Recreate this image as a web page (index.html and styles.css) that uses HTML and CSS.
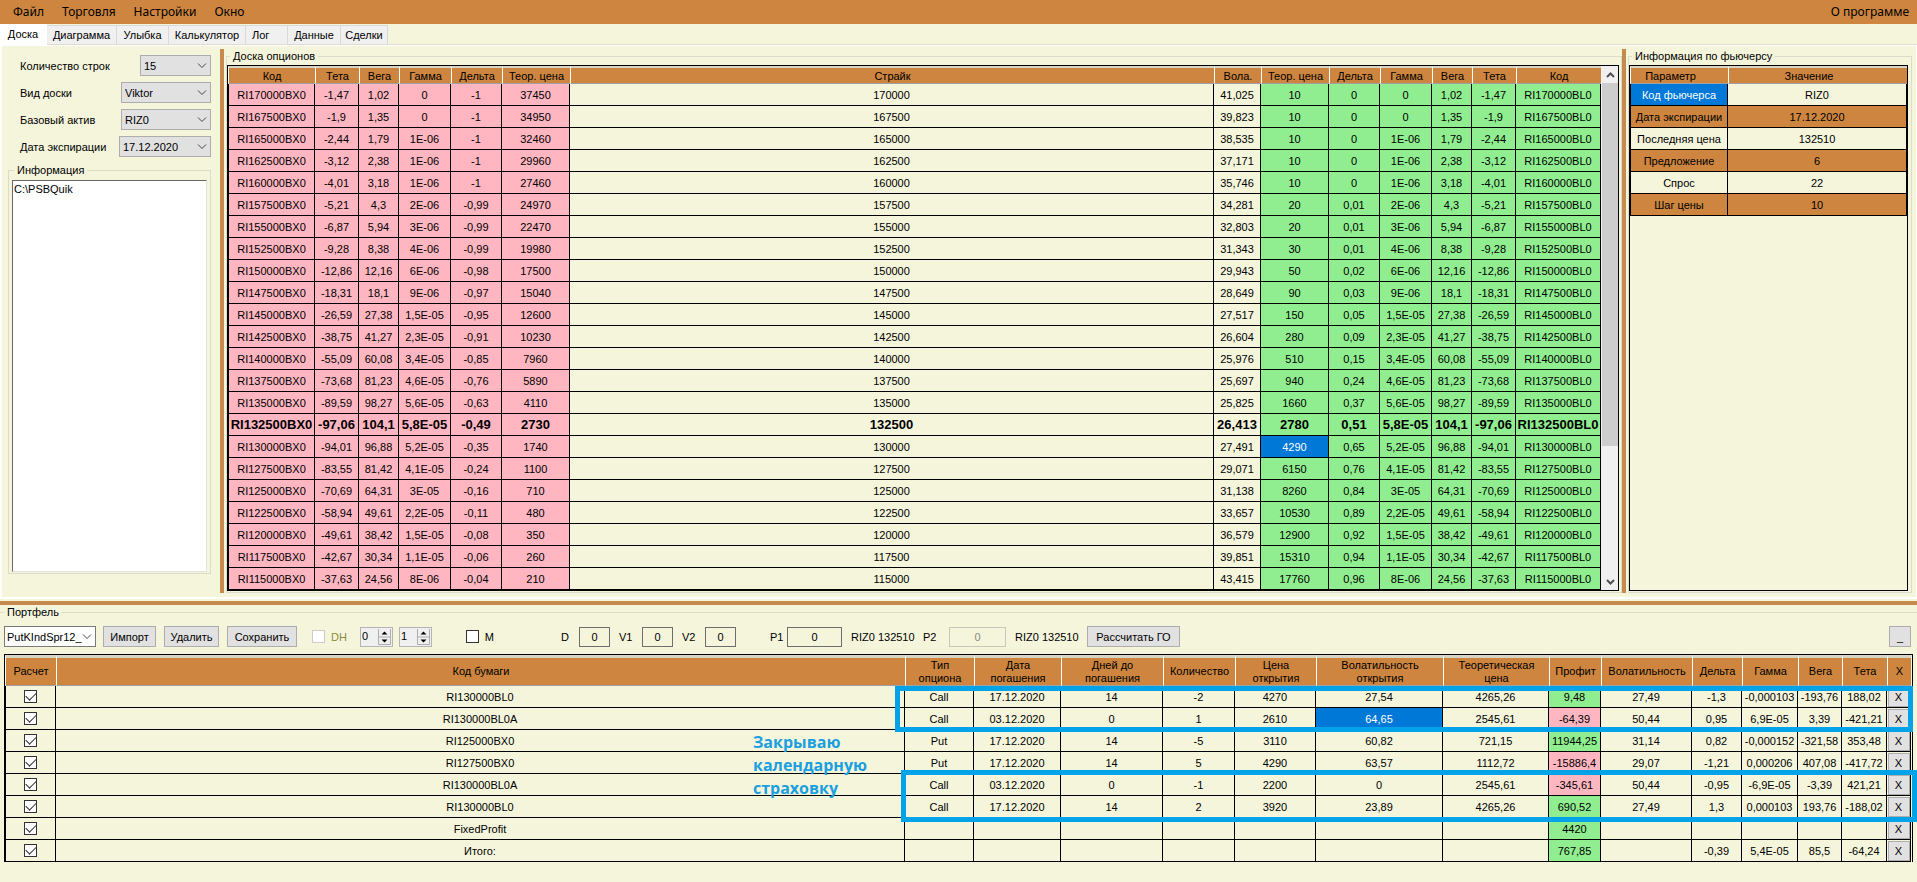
FILE: index.html
```html
<!DOCTYPE html>
<html lang="ru">
<head>
<meta charset="utf-8">
<title>Доска опционов</title>
<link rel="stylesheet" href="styles.css">
</head>
<body>
<nav class="menu">
  <button class="menu-item">Файл</button>
  <button class="menu-item">Торговля</button>
  <button class="menu-item">Настройки</button>
  <button class="menu-item">Окно</button>
  <button class="menu-item menu-about">О программе</button>
</nav>
<div class="tabs" role="tablist">
  <button class="tab tab-active w47" role="tab" aria-selected="true">Доска</button>
  <button class="tab w70" role="tab">Диаграмма</button>
  <button class="tab w52" role="tab">Улыбка</button>
  <button class="tab w77" role="tab">Калькулятор</button>
  <button class="tab tab-short w42" role="tab">Лог</button>
  <button class="tab w53" role="tab">Данные</button>
  <button class="tab w47" role="tab">Сделки</button>
</div>

<main class="workspace">
  <section class="settings">
    <div class="setting">
      <label for="rows">Количество строк</label>
      <span class="combo combo-s"><select id="rows"><option>15</option></select><svg class="chev" viewBox="0 0 10 6"><path d="M1 .5l4 4 4-4"/></svg></span>
    </div>
    <div class="setting">
      <label for="view">Вид доски</label>
      <span class="combo combo-m"><select id="view"><option>Viktor</option></select><svg class="chev" viewBox="0 0 10 6"><path d="M1 .5l4 4 4-4"/></svg></span>
    </div>
    <div class="setting">
      <label for="base">Базовый актив</label>
      <span class="combo combo-m"><select id="base"><option>RIZ0</option></select><svg class="chev" viewBox="0 0 10 6"><path d="M1 .5l4 4 4-4"/></svg></span>
    </div>
    <div class="setting">
      <label for="expiry">Дата экспирации</label>
      <span class="combo combo-l"><select id="expiry"><option>17.12.2020</option></select><svg class="chev" viewBox="0 0 10 6"><path d="M1 .5l4 4 4-4"/></svg></span>
    </div>
    <fieldset class="group log-group">
      <legend>Информация</legend>
      <textarea class="log" aria-label="Информация">C:\PSBQuik</textarea>
    </fieldset>
  </section>
  <div class="vsplit"></div>
  <fieldset class="group board-group">
    <legend>Доска опционов</legend>
    <div class="grid board">
      <table class="data" id="board">
        <colgroup><col class="w87"><col class="w44"><col class="w40"><col class="w52"><col class="w51"><col class="w68"><col><col class="w47"><col class="w68"><col class="w51"><col class="w52"><col class="w40"><col class="w44"><col class="w85"></colgroup>
        <thead><tr><th>Код</th><th>Тета</th><th>Вега</th><th>Гамма</th><th>Дельта</th><th>Теор. цена</th><th>Страйк</th><th>Вола.</th><th>Теор. цена</th><th>Дельта</th><th>Гамма</th><th>Вега</th><th>Тета</th><th>Код</th></tr></thead>
        <tbody></tbody>
      </table>
      <div class="scroll">
        <button class="scroll-btn" aria-label="Вверх"><svg viewBox="0 0 9 6"><path d="M1 5l3.500-3.500L8 5"/></svg></button>
        <div class="track"><div class="thumb"></div></div>
        <button class="scroll-btn" aria-label="Вниз"><svg viewBox="0 0 9 6"><path d="M1 1l3.500 3.500L8 1"/></svg></button>
      </div>
    </div>
  </fieldset>
  <div class="vsplit"></div>
  <fieldset class="group future-group">
    <legend>Информация по фьючерсу</legend>
    <div class="grid future">
      <table class="data">
        <colgroup><col class="w98"><col></colgroup>
        <thead><tr><th class="sortable">Параметр</th><th class="sortable">Значение</th></tr></thead>
        <tbody>
          <tr><td class="sel">Код фьючерса</td><td>RIZ0</td></tr>
          <tr class="alt"><td>Дата экспирации</td><td>17.12.2020</td></tr>
          <tr><td>Последняя цена</td><td>132510</td></tr>
          <tr class="alt"><td>Предложение</td><td>6</td></tr>
          <tr><td>Спрос</td><td>22</td></tr>
          <tr class="alt"><td>Шаг цены</td><td>10</td></tr>
        </tbody>
      </table>
    </div>
  </fieldset>
</main>
<div class="hsplit"></div>

<fieldset class="portfolio">
  <legend>Портфель</legend>
  <div class="toolbar">
    <span class="combo combo-white"><select aria-label="Портфель"><option>PutKIndSpr12_</option></select><svg class="chev" viewBox="0 0 10 6"><path d="M1 .5l4 4 4-4"/></svg></span>
    <div class="actions">
      <button class="btn btn-import">Импорт</button>
      <button class="btn btn-delete">Удалить</button>
      <button class="btn btn-save">Сохранить</button>
    </div>
    <label class="tick tick-dh"><input type="checkbox" disabled>DH</label>
    <div class="spins">
      <span class="spin"><input type="number" value="0" aria-label="DH от"><svg viewBox="0 0 13 16"><path class="face" d="M.5 0v15.500h12V0M.5 8h12"/><path d="M3.500 5.500h6l-3-3zM3.500 10.500h6l-3 3z"/></svg></span>
      <span class="spin"><input type="number" value="1" aria-label="DH до"><svg viewBox="0 0 13 16"><path class="face" d="M.5 0v15.500h12V0M.5 8h12"/><path d="M3.500 5.500h6l-3-3zM3.500 10.500h6l-3 3z"/></svg></span>
    </div>
    <label class="tick tick-m"><input type="checkbox">M</label>
    <div class="params">
      <label class="param">D<input value="0"></label>
      <label class="param param-v">V1<input value="0"></label>
      <label class="param param-v">V2<input value="0"></label>
    </div>
    <div class="prices">
      <label class="param param-p1">P1<input value="0"></label>
      <span>RIZ0 132510</span>
      <label class="param param-p2">P2<input value="0" disabled></label>
      <span>RIZ0 132510</span>
      <button class="btn btn-calc">Рассчитать ГО</button>
    </div>
    <button class="btn btn-min">_</button>
  </div>
  <div class="grid deals">
    <table class="data deals-table" id="deals">
      <colgroup><col class="w51"><col><col class="w69"><col class="w87"><col class="w102"><col class="w72"><col class="w81"><col class="w127"><col class="w106"><col class="w52"><col class="w91"><col class="w50"><col class="w56"><col class="w44"><col class="w45"><col class="w24"></colgroup>
      <thead><tr><th>Расчет</th><th>Код бумаги</th><th>Тип<br>опциона</th><th>Дата<br>погашения</th><th>Дней до<br>погашения</th><th>Количество</th><th>Цена<br>открытия</th><th>Волатильность<br>открытия</th><th>Теоретическая<br>цена</th><th>Профит</th><th>Волатильность</th><th>Дельта</th><th>Гамма</th><th>Вега</th><th>Тета</th><th>X</th></tr></thead>
      <tbody></tbody>
    </table>
    <div class="mark mark-open"></div>
    <div class="mark mark-close"></div>
    <p class="note">Закрываю календарную страховку</p>
  </div>
</fieldset>
<script src="app.js"></script>
</body>
</html>
```

FILE: styles.css
```css
* { box-sizing: border-box; }

body {
  margin: 0;
  min-height: 100vh;
  display: flex;
  flex-direction: column;
  overflow: hidden;
  background: #f5f5dc;
  color: #000;
  font: 11px/14px "Liberation Sans", Arial, sans-serif;
}

button, select, input, textarea { font: inherit; color: inherit; }
button { padding: 0; }

/* Menu and tabs */
.menu { display: flex; height: 24px; padding: 0 8px 0 13px; background: #cd853f; }
.menu-item {
  margin-right: 18px;
  border: 0;
  background: none;
  font: 12px/24px "Noto Sans", sans-serif;
}
.menu-about { margin: 0 0 0 auto; }

.tabs { display: flex; align-items: flex-end; height: 21px; border-bottom: 1px solid #dcdcd0; }
.tab {
  height: 19px;
  padding: 0;
  border: 1px solid #d9d9d9;
  border-width: 1px 1px 0 0;
  background: #f0f0f0;
  white-space: nowrap;
}
.tab-short { padding-left: 6px; text-align: left; }
.tab-active { height: 21px; margin-bottom: -1px; padding-bottom: 2px; border-color: #fff; background: #fff; }

/* Upper workspace */
.workspace {
  display: flex;
  padding: 3px 4px 4px 0;
  border: 2px solid #fff;
  border-width: 1px 1px 2px 2px;
}
.vsplit { width: 4px; background: #c58a4e; }
.hsplit { height: 4px; margin-top: 2px; background: #c58a4e; }
.group { margin: 0; min-width: 0; border: 1px solid #dcdccb; }
legend { height: 14px; padding: 0 3px; }

.settings { display: flex; flex-direction: column; width: 218px; padding: 6px 9px 19px 6px; }
.setting { display: flex; align-items: center; justify-content: space-between; height: 21px; margin-bottom: 6px; padding-left: 12px; }

.combo { position: relative; display: block; height: 21px; }
.combo select {
  display: block;
  width: 100%;
  height: 100%;
  padding: 0 0 0 3px;
  border: 1px solid #adadad;
  border-radius: 0;
  background: #e1e1e1;
  appearance: none;
}
.chev { position: absolute; right: 4px; top: 8px; width: 10px; height: 6px; fill: none; stroke: #444; pointer-events: none; }
.combo-s { width: 71px; }
.combo-m { width: 90px; }
.combo-l { width: 92px; }
.combo-white { width: 92px; }
.combo-white select { padding-left: 2px; border-color: #7a7a7a; background: #fff; }

.log-group { display: flex; flex: 1; padding: 3px 3px 1px; }
.log-group legend { margin-left: 2px; }
.log {
  display: block;
  width: 100%;
  padding: 1px;
  border: 1px solid #fff;
  border-color: #696969 #e3e3e3 #e3e3e3 #696969;
  background: #fff;
  resize: none;
}

.board-group { flex: 1; margin-left: 2px; padding: 2px 2px 1px 0; }
.board-group legend, .future-group legend { margin-left: 3px; }
.future-group { display: flex; width: 284px; margin-left: 2px; padding: 2px 3px 1px 0; }

/* Grids */
.grid { border: 1px solid #000; }
.board { display: flex; }
.future { flex: 1; }
.data { width: 100%; table-layout: fixed; border-collapse: separate; border-spacing: 0; text-align: center; }
.data th {
  height: 18px;
  padding: 0;
  border: solid;
  border-width: 2px 0 1px 1px;
  border-color: #d8d4c4 #fff #a0a0a0;
  background: #cd853f;
  font-weight: normal;
}
.data td { height: 22px; padding: 0; border: 1px solid #000; border-width: 0 1px 1px 0; white-space: nowrap; }
.data td:first-child { border-left-width: 1px; }
.data th.sortable { padding-right: 18px; }
.alt { background: #cd853f; }
.data .put, .data .neg { background: #ffb6c1; }
.data .call, .data .pos { background: #90ee90; }
.data .sel { background: #0078d7; color: #fff; }
.atm { font-size: 13px; font-weight: bold; }

.w24 { width: 24px; } .w40 { width: 40px; } .w42 { width: 42px; } .w44 { width: 44px; }
.w45 { width: 45px; } .w47 { width: 47px; } .w50 { width: 50px; } .w51 { width: 51px; }
.w52 { width: 52px; } .w53 { width: 53px; } .w56 { width: 56px; } .w68 { width: 68px; }
.w69 { width: 69px; } .w70 { width: 70px; } .w72 { width: 72px; } .w77 { width: 77px; }
.w81 { width: 81px; } .w85 { width: 85px; } .w87 { width: 87px; } .w91 { width: 91px; }
.w98 { width: 98px; } .w102 { width: 102px; } .w106 { width: 106px; } .w127 { width: 127px; }

.scroll { display: flex; flex: none; flex-direction: column; width: 17px; padding-left: 1px; background: #f0f0f0; }
.scroll-btn { height: 17px; border: 0; background: none; }
.scroll-btn svg { display: block; width: 9px; height: 6px; margin: 0 auto; fill: none; stroke: #505050; stroke-width: 2; }
.track { flex: 1; }
.thumb { height: 74%; background: #cdcdcd; }

/* Portfolio */
.portfolio { display: flex; flex: 1; flex-direction: column; min-width: 0; margin: 0; padding: 0 4px; border: 0 solid #dcdccb; border-top-width: 1px; }
.portfolio > legend { padding-left: 3px; }
.toolbar { display: flex; align-items: center; height: 35px; }
.btn { height: 21px; border: 1px solid #adadad; background: #e1e1e1; }
.actions { display: flex; gap: 8px; margin-left: 7px; }
.btn-import { width: 53px; }
.btn-delete { width: 55px; }
.btn-save { width: 70px; }
.btn-calc { width: 93px; }
.btn-min { width: 22px; margin: 0 2px 0 auto; }

input[type="checkbox"] {
  display: block;
  width: 13px;
  height: 13px;
  margin: 0;
  border: 1px solid #333;
  background: #fff;
  appearance: none;
}
input[type="checkbox"]:checked::before {
  content: "";
  display: block;
  width: 9px;
  height: 5px;
  margin: 1px;
  border: solid #333;
  border-width: 0 0 1px 1px;
  transform: rotate(-45deg);
}
input[type="checkbox"]:disabled { border-color: #ccc; }
.tick { display: flex; align-items: center; gap: 6px; }
.tick-dh { width: 48px; margin-left: 15px; color: #8c8c3c; }
.tick-m { width: 28px; margin-left: 34px; }
.spins { display: flex; gap: 6px; }
.spin { position: relative; width: 33px; height: 20px; }
.spin input { display: block; width: 100%; height: 100%; padding: 0 15px 2px 1px; border: 1px solid #b4b4b4; border-radius: 0; background: #f0f0f0; appearance: textfield; }
.spin input::-webkit-inner-spin-button { display: none; }
.spin svg { position: absolute; right: 2px; top: 2px; width: 13px; height: 16px; pointer-events: none; }
.spin .face { fill: #f0f0f0; stroke: #adadad; }

.params, .prices { display: flex; align-items: center; gap: 9px; }
.params { margin-left: 67px; }
.prices { margin-left: 34px; }
.prices span { width: 63px; white-space: nowrap; }
.param { display: flex; align-items: center; justify-content: space-between; width: 49px; }
.param input { width: 31px; height: 20px; padding: 0; border: 1px solid #6e6e6e; background: #f5f5dc; text-align: center; }
.param input:disabled { border-color: #c8c8b8; color: #8c8c80; }
.param-v { width: 54px; }
.param-p1 { width: 72px; }
.param-p1 input { width: 55px; }
.param-p2 { width: 83px; }
.param-p2 input { width: 57px; }

.deals { position: relative; flex: 1; padding-right: 1px; border-bottom: 0; }
.deals-table th { height: 31px; border-top-width: 3px; line-height: 13px; }
.deals-table input { margin: 0 auto; }
.row-x { display: block; width: 22px; height: 20px; margin: 0 auto; border: 1px solid #adadad; background: #e1e1e1; }

/* Annotations over the grid */
.mark { position: absolute; border: 5px solid #00a2e8; pointer-events: none; }
.mark-open { top: 31px; right: -1px; width: 1018px; height: 46px; }
.mark-close { top: 115px; right: -5px; width: 1016px; height: 52px; }
.note {
  position: absolute;
  top: 76px;
  right: 1029px;
  width: 130px;
  margin: 0;
  color: #1a9fe0;
  font: bold 16px/23px "Open Sans", "Noto Sans", sans-serif;
}
```

FILE: app.js
```js
// strike, theta, vega, gamma, put delta, put price, volatility, call price, call delta
const board = [
  ["170000", "-1,47", "1,02", "0", "-1", "37450", "41,025", "10", "0"],
  ["167500", "-1,9", "1,35", "0", "-1", "34950", "39,823", "10", "0"],
  ["165000", "-2,44", "1,79", "1E-06", "-1", "32460", "38,535", "10", "0"],
  ["162500", "-3,12", "2,38", "1E-06", "-1", "29960", "37,171", "10", "0"],
  ["160000", "-4,01", "3,18", "1E-06", "-1", "27460", "35,746", "10", "0"],
  ["157500", "-5,21", "4,3", "2E-06", "-0,99", "24970", "34,281", "20", "0,01"],
  ["155000", "-6,87", "5,94", "3E-06", "-0,99", "22470", "32,803", "20", "0,01"],
  ["152500", "-9,28", "8,38", "4E-06", "-0,99", "19980", "31,343", "30", "0,01"],
  ["150000", "-12,86", "12,16", "6E-06", "-0,98", "17500", "29,943", "50", "0,02"],
  ["147500", "-18,31", "18,1", "9E-06", "-0,97", "15040", "28,649", "90", "0,03"],
  ["145000", "-26,59", "27,38", "1,5E-05", "-0,95", "12600", "27,517", "150", "0,05"],
  ["142500", "-38,75", "41,27", "2,3E-05", "-0,91", "10230", "26,604", "280", "0,09"],
  ["140000", "-55,09", "60,08", "3,4E-05", "-0,85", "7960", "25,976", "510", "0,15"],
  ["137500", "-73,68", "81,23", "4,6E-05", "-0,76", "5890", "25,697", "940", "0,24"],
  ["135000", "-89,59", "98,27", "5,6E-05", "-0,63", "4110", "25,825", "1660", "0,37"],
  ["132500", "-97,06", "104,1", "5,8E-05", "-0,49", "2730", "26,413", "2780", "0,51"],
  ["130000", "-94,01", "96,88", "5,2E-05", "-0,35", "1740", "27,491", "4290", "0,65"],
  ["127500", "-83,55", "81,42", "4,1E-05", "-0,24", "1100", "29,071", "6150", "0,76"],
  ["125000", "-70,69", "64,31", "3E-05", "-0,16", "710", "31,138", "8260", "0,84"],
  ["122500", "-58,94", "49,61", "2,2E-05", "-0,11", "480", "33,657", "10530", "0,89"],
  ["120000", "-49,61", "38,42", "1,5E-05", "-0,08", "350", "36,579", "12900", "0,92"],
  ["117500", "-42,67", "30,34", "1,1E-05", "-0,06", "260", "39,851", "15310", "0,94"],
  ["115000", "-37,63", "24,56", "8E-06", "-0,04", "210", "43,415", "17760", "0,96"]
];

const deals = [
  ["RI130000BL0", "Call", "17.12.2020", "14", "-2", "4270", "27,54", "4265,26", "9,48", "27,49", "-1,3", "-0,000103", "-193,76", "188,02"],
  ["RI130000BL0A", "Call", "03.12.2020", "0", "1", "2610", "64,65", "2545,61", "-64,39", "50,44", "0,95", "6,9E-05", "3,39", "-421,21"],
  ["RI125000BX0", "Put", "17.12.2020", "14", "-5", "3110", "60,82", "721,15", "11944,25", "31,14", "0,82", "-0,000152", "-321,58", "353,48"],
  ["RI127500BX0", "Put", "17.12.2020", "14", "5", "4290", "63,57", "1112,72", "-15886,4", "29,07", "-1,21", "0,000206", "407,08", "-417,72"],
  ["RI130000BL0A", "Call", "03.12.2020", "0", "-1", "2200", "0", "2545,61", "-345,61", "50,44", "-0,95", "-6,9E-05", "-3,39", "421,21"],
  ["RI130000BL0", "Call", "17.12.2020", "14", "2", "3920", "23,89", "4265,26", "690,52", "27,49", "1,3", "0,000103", "193,76", "-188,02"],
  ["FixedProfit", "", "", "", "", "", "", "", "4420", "", "", "", "", ""],
  ["Итого:", "", "", "", "", "", "", "", "767,85", "", "-0,39", "5,4E-05", "85,5", "-64,24"]
];
deals.forEach(r => { while (r.length > 14) r.splice(1, 1); });

const cell = (text, cls) => `<td${cls ? ` class="${cls}"` : ""}>${text}</td>`;

document.querySelector("#board tbody").innerHTML = board.map(r => {
  const [strike, theta, vega, gamma, putDelta, putPrice, vola, callPrice, callDelta] = r;
  const put = [`RI${strike}BX0`, theta, vega, gamma, putDelta, putPrice].map(t => cell(t, "put"));
  const call = [callDelta, gamma, vega, theta, `RI${strike}BL0`].map(t => cell(t, "call"));
  const price = cell(callPrice, strike === "130000" ? "sel" : "call");
  return `<tr${strike === "132500" ? ' class="atm"' : ""}>${put.join("")}${cell(strike)}${cell(vola)}${price}${call.join("")}</tr>`;
}).join("");

document.querySelector("#deals tbody").innerHTML = deals.map((r, i) => {
  const cells = r.map((t, c) => {
    if (c === 8) return cell(t, t.startsWith("-") ? "neg" : "pos");
    return cell(t, i === 1 && c === 6 ? "sel" : "");
  });
  return `<tr><td><input type="checkbox" checked aria-label="Расчет ${r[0]}"></td>${cells.join("")}<td><button class="row-x">X</button></td></tr>`;
}).join("");
```
